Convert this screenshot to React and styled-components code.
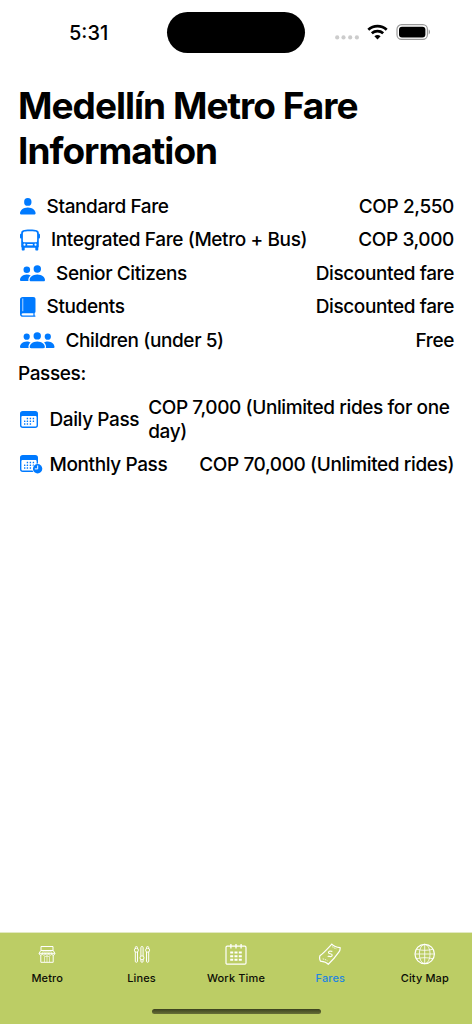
import React from 'react';
import styled, { createGlobalStyle } from 'styled-components';

const GlobalStyle = createGlobalStyle`
  * { box-sizing: border-box; }

  body {
    margin: 0;
    background-color: #fff;
    color: #000;
    font-family: Inter, "Liberation Sans", sans-serif;
  }

  svg { display: block; flex-shrink: 0; }
`;

const Screen = styled.div`
  display: flex;
  flex-direction: column;
  width: 472px;
  height: 1024px;
  overflow: hidden;
`;

const StatusBar = styled.header`
  display: grid;
  grid-template-columns: 167px 138px 1fr;
  height: 82.6px;
  padding-top: 12px;
  align-items: start;
`;

const Clock = styled.time`
  padding: 9px 0 0 69px;
  font-size: 20px;
  font-weight: 550;
  line-height: 25px;
  letter-spacing: 0;
`;

const Island = styled.div`
  height: 41px;
  border-radius: 21px;
  background-color: #000;
`;

const StatusIcons = styled.div`
  display: flex;
  padding: 12px 0 0 29px;
`;

const Content = styled.main`
  flex: 1;
  padding: 0 18px;
`;

const Title = styled.h1`
  margin: 0 0 22px;
  font-size: 37px;
  font-weight: 700;
  line-height: 45px;
  letter-spacing: -0.98px;
`;

const List = styled.div`
  display: flex;
  flex-direction: column;
  gap: 9.5px;
  font-size: 19px;
  font-weight: 500;
  line-height: 24px;
  letter-spacing: -0.39px;
`;

const Row = styled.div`
  display: flex;
  align-items: center;
  justify-content: space-between;
  padding-left: 2px;
`;

const Label = styled.div`
  display: flex;
  align-items: center;
  flex-shrink: 0;
  gap: ${props => props.$gap || 11}px;
  white-space: nowrap;
`;

const Value = styled.div`
  margin-left: 9px;
`;

const TabBar = styled.nav`
  display: grid;
  grid-template-columns: repeat(5, 1fr);
  grid-template-rows: 75px 1fr;
  height: 92px;
  border-top: 1px solid #e2e9c3;
  background-color: #bccd65;
`;

const Tab = styled.div`
  display: flex;
  flex-direction: column;
  align-items: center;
  padding-top: 10px;
  font-size: 11px;
  font-weight: 550;
  line-height: 14px;
  letter-spacing: 0.13px;
  color: ${props => (props.$active ? '#1f86e0' : '#0c0d06')};

  svg { margin-bottom: 6px; }
`;

const HomeIndicator = styled.div`
  grid-column: 1 / -1;
  justify-self: center;
  width: 169px;
  height: 5px;
  margin-top: 1px;
  border-radius: 3px;
  background: linear-gradient(#3c421f, #666f37);
`;

const blue = '#007aff';

function PersonIcon() {
  return (
    <svg width="15.6" height="18" viewBox="0 0 15.6 18" fill={blue}>
      <ellipse cx="7.8" cy="3.9" rx="3.7" ry="3.9" />
      <path d="M0 15.2C0 12.4 3.1 9.5 7.8 9.5s7.8 2.9 7.8 5.7c0 .9-.6 1.4-1.7 1.4H1.7C.6 16.6 0 16.1 0 15.2z" />
    </svg>
  );
}

function BusIcon() {
  return (
    <svg width="20" height="22" viewBox="0 0 20 22" fill={blue}>
      <path fillRule="evenodd" d="M1.2 3.8C1.2 1.3 3.5.5 10 .5s8.800.8 8.800 3.300V4.600c.8.1 1.200.6 1.200 1.500v2.200c0 .8-.4 1.300-1.200 1.300v8.100c0 .5-.2.8-.5.9v1.900c0 .7-.4 1-1 1h-1c-.6 0-1-.3-1-1v-1.700H4.700v1.700c0 .7-.4 1-1 1h-1c-.6 0-1-.3-1-1v-1.900c-.3-.1-.5-.4-.5-.9V9.600C.4 9.600 0 9.100 0 8.300V6.100c0-.9.4-1.400 1.200-1.500zM2.900 5v6.800c0 1 .5 1.500 1.500 1.500h11.200c1 0 1.500-.5 1.500-1.500V5c0-1.700-.6-2.200-1.900-2.400-2.400-.4-8-.4-10.400 0C3.500 2.800 2.900 3.300 2.900 5z" />
      <circle cx="4.500" cy="15.700" r="1.100" fill="#fff" />
      <circle cx="15.500" cy="15.700" r="1.100" fill="#fff" />
      <path d="M7.200 15h5.600v1.400H7.200z" fill="#fff" />
    </svg>
  );
}

function TwoPeopleIcon() {
  return (
    <svg width="25" height="18" viewBox="0 0 25 18" fill={blue}>
      <circle cx="6.800" cy="4.700" r="3.300" />
      <path d="M0 14.900C0 12.400 2.700 9.500 6.700 9.500c1.600 0 2.900.4 4 1.100-1.600 1.100-2.700 3.300-2.300 5.400H1.500C.5 16 0 15.600 0 14.900z" />
      <circle cx="17.300" cy="4" r="3.700" />
      <path d="M9.600 15c0-2.500 3-5.400 7.700-5.400S25 12.500 25 15c0 .8-.5 1.300-1.500 1.300H11.100c-1 0-1.500-.5-1.500-1.300z" />
    </svg>
  );
}

function BookIcon() {
  return (
    <svg width="15.600" height="20" viewBox="0 0 15.600 20" fill={blue}>
      <path fillRule="evenodd" d="M2.800 0h10.400c1.500 0 2.300.8 2.300 2.300v12.200c0 .7-.3 1.200-.9 1.500v2.500h.4c.8 0 .8 1.300 0 1.300H2.900C1 19.800 0 18.700 0 16.900V2.800C0 1 1 0 2.800 0zM3 16.200c-1.900 0-1.900 2.300 0 2.300h10.400v-2.300zM2.500 1.400v12.800h.7V1.400z" />
    </svg>
  );
}

function ThreePeopleIcon() {
  return (
    <svg width="34.500" height="18" viewBox="0 0 34.500 18" fill={blue}>
      <circle cx="6.700" cy="4.700" r="3.100" />
      <circle cx="27.800" cy="4.700" r="3.100" />
      <circle cx="17.250" cy="3.900" r="3.700" />
      <path d="M0 14.900C0 12.400 2.700 9.500 6.700 9.500c1.600 0 2.800.4 3.900 1.100C8.900 11.900 8.100 13.900 8.600 16H1.500C.5 16 0 15.600 0 14.900z" />
      <path d="M34.500 14.900c0-2.500-2.700-5.400-6.700-5.400-1.600 0-2.800.4-3.900 1.100 1.700 1.300 2.500 3.300 2 5.400H33c1 0 1.500-.4 1.500-1.100z" />
      <path d="M9.700 15c0-2.500 2.900-5.400 7.550-5.400S24.800 12.500 24.800 15c0 .8-.5 1.200-1.500 1.200H11.200c-1 0-1.500-.4-1.500-1.200z" />
    </svg>
  );
}

const gridDots = [
  [7, 7.500], [10, 7.500], [13, 7.500],
  [4.300, 10.300], [7, 10.300], [10, 10.300], [13, 10.300],
  [4.300, 13], [7, 13], [10, 13],
];

function DayIcon() {
  return (
    <svg width="18" height="18" viewBox="0 0 18 18" fill={blue}>
      <path fillRule="evenodd" d="M2.800 0h12.400C17 0 18 1 18 2.700v11.500c0 1.800-1 2.700-2.800 2.700H2.800C1 16.900 0 16 0 14.200V2.700C0 1 1 0 2.800 0zM1.400 6.300V14c0 1 .5 1.500 1.500 1.500h12.200c1 0 1.500-.5 1.500-1.500V6.300c0-.9-.5-1.300-1.400-1.300H2.800c-.9 0-1.400.4-1.400 1.300z" />
      {gridDots.map(([x, y]) => <rect key={`${x}-${y}`} x={x - 0.3} y={y - 0.700} width="1.400" height="1.400" rx=".3" />)}
    </svg>
  );
}

function MonthIcon() {
  return (
    <svg width="22.500" height="19.500" viewBox="0 0 22.500 19.500" fill={blue}>
      <path fillRule="evenodd" d="M2.800 0h12.400C17 0 18 1 18 2.700v11.500c0 1.800-1 2.700-2.800 2.700H2.800C1 16.900 0 16 0 14.200V2.700C0 1 1 0 2.800 0zM1.400 6.300V14c0 1 .5 1.500 1.500 1.500h12.200c1 0 1.500-.5 1.500-1.500V6.300c0-.9-.5-1.300-1.400-1.300H2.800c-.9 0-1.400.4-1.400 1.300z" />
      {gridDots.map(([x, y]) => <rect key={`${x}-${y}`} x={x - 0.3} y={y - 0.700} width="1.400" height="1.400" rx=".3" />)}
      <circle cx="17.600" cy="13.700" r="5.300" fill="#fff" />
      <circle cx="17.600" cy="13.700" r="4.700" />
      <path d="M17.700 10.900v3h-2.500" fill="none" stroke="#fff" strokeLinecap="round" />
    </svg>
  );
}

function SignalIcon() {
  return (
    <svg width="96" height="17" viewBox="0 0 96 17">
      {[3.200, 9.500, 16.200, 22.900].map(x => <circle key={x} cx={x} cy="13.400" r="2.100" fill="#ccc" />)}
      <path d="M34.300 5.700a13.800 13.800 0 0 1 18.400 0M37.800 9.300a8.800 8.800 0 0 1 11.400 0" fill="none" stroke="#000" strokeWidth="2.800" />
      <path d="M40.400 12.300a4.700 4.700 0 0 1 6.200 0l-3.100 3.100z" />
      <rect x="63" y=".7" width="30.400" height="14.700" rx="4.600" fill="#fff" stroke="#999" strokeWidth="1.200" />
      <rect x="65" y="2.700" width="26.400" height="10.700" rx="3" />
      <path d="M94.700 5.600c1.700.6 1.700 4.300 0 4.900z" fill="#999" />
    </svg>
  );
}

function ShopIcon() {
  return (
    <svg width="22" height="22" viewBox="0 0 22 22" fill="none" stroke="#fff" strokeWidth="1">
      <path d="M5 7.500V3.500h12v4M4.800 7.500h12.400l1.700 2.800H3.100zM3.100 10.300c0 2.400 3.100 2.400 3.100 0 0 2.400 3.200 2.400 3.200 0 0 2.400 3.200 2.400 3.200 0 0 2.400 3.200 2.400 3.200 0 0 2.400 3.100 2.400 3.100 0M4.800 12v7.300h12.400V12" />
      <path d="M8.500 19v-5.500h5V19M11 13.500V19" strokeWidth=".6" />
      <path d="M7.500 7.500l-1 2.800M11 7.500v2.800M14.500 7.500l1 2.800M9.200 7.500l-.4 2.800M12.800 7.500l.4 2.800" strokeWidth=".6" />
    </svg>
  );
}

function SlidersIcon() {
  return (
    <svg width="22" height="22" viewBox="0 0 22 22" fill="none" stroke="#fff" strokeWidth="1">
      <rect x="4.300" y="3.500" width="2.200" height="15.800" rx="1.100" />
      <rect x="9.900" y="3.500" width="2.200" height="15.800" rx="1.100" />
      <rect x="15.500" y="3.500" width="2.200" height="15.800" rx="1.100" />
      <g fill="#bccd65">
        <circle cx="5.400" cy="7.200" r="2" />
        <circle cx="11" cy="14.800" r="2" />
        <circle cx="16.600" cy="7.200" r="2" />
      </g>
    </svg>
  );
}

function ScheduleIcon() {
  return (
    <svg width="22" height="22" viewBox="0 0 22 22" fill="none" stroke="#fff" strokeWidth="1.200">
      <rect x="1" y="3.200" width="20" height="18" rx="1.200" />
      <path d="M5.900 1v4.500M11 1v4.500M16.100 1v4.500" strokeWidth="1.300" />
      <path d="M5.200 9.600h3M9.500 9.600h3M13.800 9.600h3M5.200 13.200h3M9.500 13.200h3M13.800 13.200h3M5.200 16.800h3M9.500 16.800h3M13.800 16.800h3" strokeWidth="2" />
    </svg>
  );
}

function MoneyIcon() {
  return (
    <svg width="22" height="22" viewBox="0 0 22 22" fill="none" stroke="#fff" strokeWidth="1.200">
      <path d="M.9 12.800C5.200 9.600 9.100 5 12.800 1.200c1.800 2 5.700 3.300 8.300 3.500.2 1.400-.4 3.300-1.300 4.500-2.900 4.200-6.400 8.400-10.500 12.100-1.500-1.900-5-2.900-7.900-3.200C.6 16.500.4 14.500.9 12.800z" />
      <path d="M12.500 8.600c-1.300-1.200-3.400-.3-3 1.200.4 1.300 3.500.6 3.700 2.200.2 1.500-2 2.200-3.500 1M13.300 7.800l-.9.900M9.700 12.900l-.9.900" strokeWidth="1.100" />
      <path d="M13.200 3.700c1.300 1 2.700 1.700 4.400 2.200M3.700 15.900c1.800.3 3.400.9 4.800 1.900" strokeWidth=".8" strokeDasharray="1.500 .8" />
    </svg>
  );
}

function GlobeIcon() {
  return (
    <svg width="22" height="22" viewBox="0 0 22 22" fill="none" stroke="#fff" strokeWidth=".8">
      <circle cx="10.700" cy="11" r="9.700" strokeWidth="1.200" />
      <ellipse cx="10.700" cy="11" rx="5.400" ry="9.700" />
      <path d="M10.700 1.300v19.400M1 11h19.400M2.400 6.200c5 1.500 11.600 1.500 16.600 0M2.400 15.800c5-1.500 11.600-1.500 16.600 0" />
    </svg>
  );
}

const fares = [
  { icon: <PersonIcon />, label: 'Standard Fare', value: 'COP 2,550' },
  { icon: <BusIcon />, label: 'Integrated Fare (Metro + Bus)', value: 'COP 3,000' },
  { icon: <TwoPeopleIcon />, label: 'Senior Citizens', value: 'Discounted fare' },
  { icon: <BookIcon />, label: 'Students', value: 'Discounted fare' },
  { icon: <ThreePeopleIcon />, label: 'Children (under 5)', value: 'Free' },
];

const passes = [
  { icon: <DayIcon />, label: 'Daily Pass', value: 'COP 7,000 (Unlimited rides for one day)', gap: 11.5 },
  { icon: <MonthIcon />, label: 'Monthly Pass', value: 'COP 70,000 (Unlimited rides)', gap: 7 },
];

const tabs = [
  { icon: <ShopIcon />, label: 'Metro' },
  { icon: <SlidersIcon />, label: 'Lines' },
  { icon: <ScheduleIcon />, label: 'Work Time' },
  { icon: <MoneyIcon />, label: 'Fares' },
  { icon: <GlobeIcon />, label: 'City Map' },
];

function FareRow({ icon, label, value, gap }) {
  return (
    <Row>
      <Label $gap={gap}>{icon}{label}</Label>
      <Value>{value}</Value>
    </Row>
  );
}

export default function App() {
  const [active, setActive] = React.useState('Fares');
  return (
    <Screen>
      <GlobalStyle />
      <StatusBar>
        <Clock>5:31</Clock>
        <Island />
        <StatusIcons><SignalIcon /></StatusIcons>
      </StatusBar>

      <Content>
        <Title>Medellín Metro Fare Information</Title>
        <List>
          {fares.map(fare => <FareRow key={fare.label} {...fare} />)}
          <div>Passes:</div>
          {passes.map(pass => <FareRow key={pass.label} {...pass} />)}
        </List>
      </Content>

      <TabBar>
        {tabs.map(({ icon, label }) => (
          <Tab key={label} $active={label === active} onClick={() => setActive(label)}>
            {icon}
            {label}
          </Tab>
        ))}
        <HomeIndicator />
      </TabBar>
    </Screen>
  );
}
